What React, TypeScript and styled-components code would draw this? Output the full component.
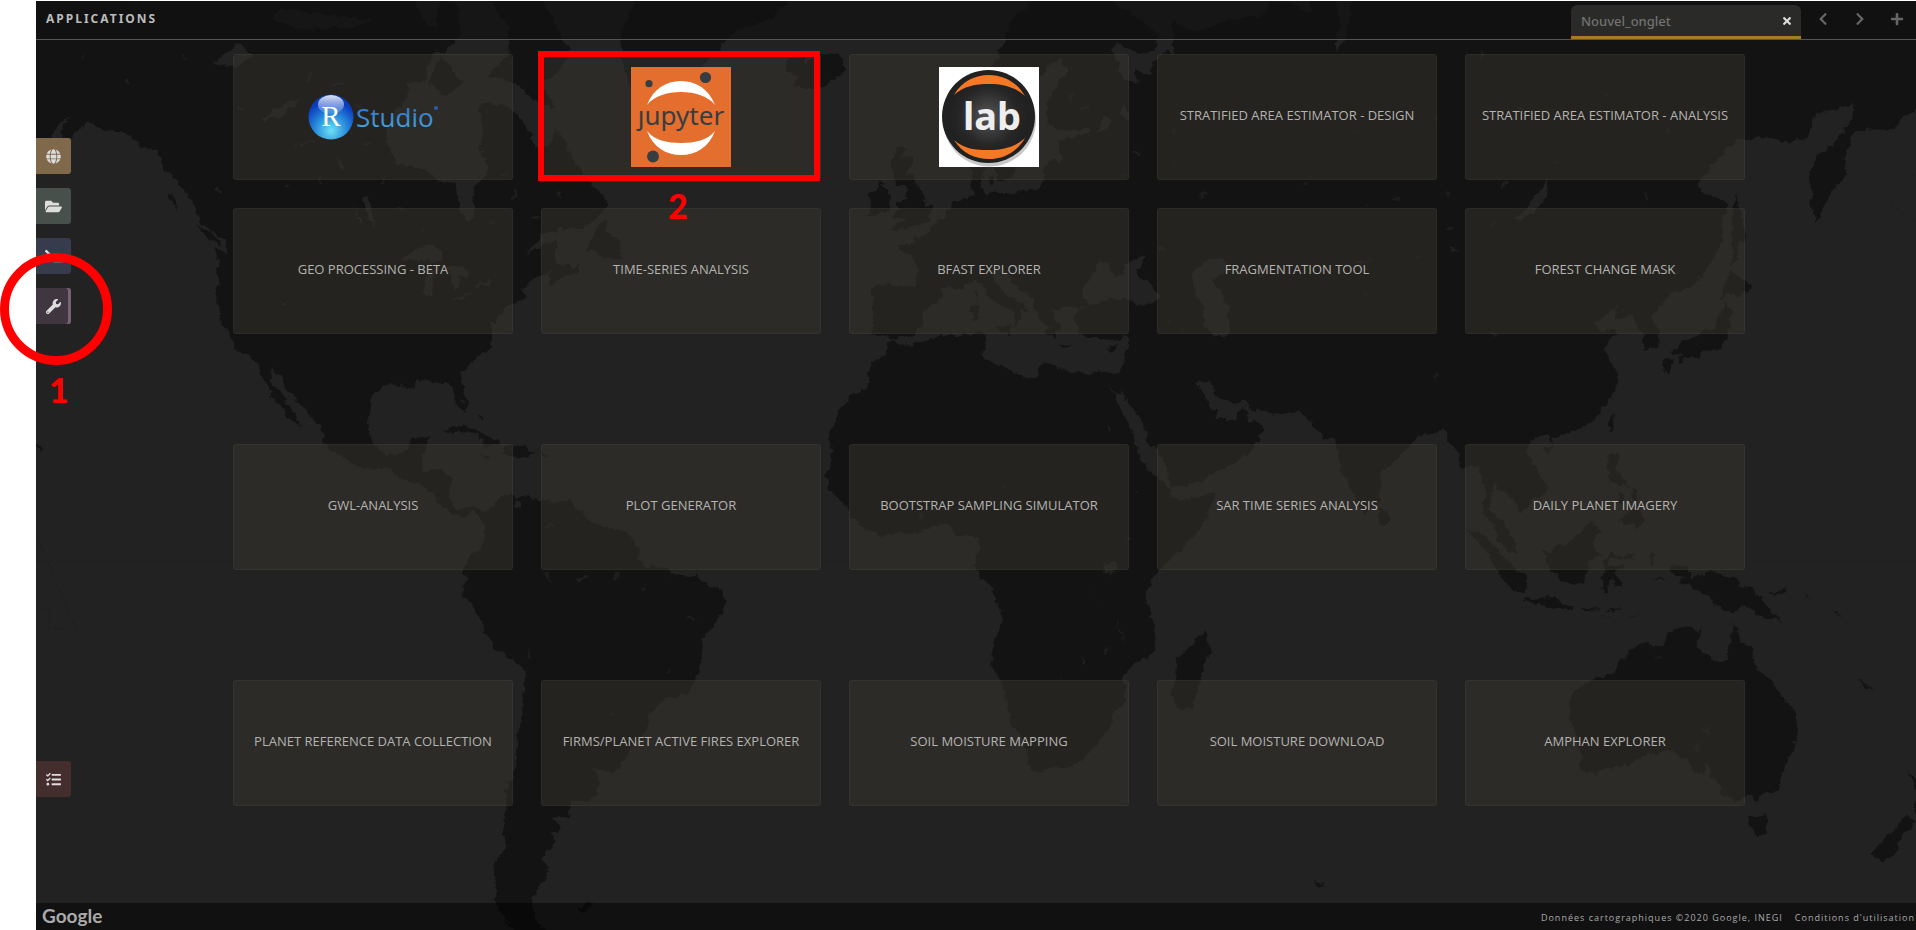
import React from "react";
import styled, { createGlobalStyle } from "styled-components";
import {
  FaChevronLeft,
  FaChevronRight,
  FaFolderOpen,
  FaGlobe,
  FaPlus,
  FaTasks,
  FaTerminal,
  FaTimes,
  FaWrench,
} from "react-icons/fa";

const GlobalStyle = createGlobalStyle`
  *, *::before, *::after { box-sizing: border-box; }
  body {
    margin: 0;
    background: #fff;
    font-family: "Noto Sans", "Open Sans", sans-serif;
  }
  button, input { font: inherit; }
`;

/* ---------- world map ---------- */

/* Coastlines as "lon,lat" pairs, projected with Web Mercator. */
const LAND: string[] = [
  // the Americas
  "-170,72 -170,66 -165,62 -162,59 -158,58.6 -156.5,57 -154.2,58.3 -153.5,59.4 -151.8,60.8 -150,61.2 -151.8,60 -151,59.2 -149,60 -147,60.9 -145,60.4 -143.5,60 -141,60 -139.5,59.6 -137.5,58.6 -136,58.3 -135,58.5 -134,57.5 -133.5,56.5 -131.5,55.5 -130.2,54.5 -128.8,53.4 -127.8,52 -127.4,51 -125.5,50.3 -124,49.4 -122.8,49 -122.4,47.5 -124.6,48.3 -124,46.2 -124.1,44 -124.4,42.8 -124.1,41 -123.8,39 -122.5,37.5 -121.9,36.6 -120.6,34.6 -118.5,34 -117.2,32.6 -116,30.5 -115.7,29.7 -114.2,28.5 -115,27.8 -113.6,26.7 -112.2,25.5 -112,24.6 -110.3,23.4 -109.5,23.1 -110.4,24.3 -111.2,25.8 -112.7,27.8 -114.5,30 -114.8,31.8 -113.1,31.1 -112.2,29 -110.5,27.4 -109.3,26.3 -108,25 -106.4,23.2 -105.4,21.5 -105.6,20.4 -104.3,19.2 -102,17.9 -99.8,16.7 -97,15.8 -94.8,16.2 -93.5,15.6 -92.2,14.5 -90,13.8 -87.6,13 -87.4,12.5 -86,11.2 -85.7,10 -84.8,9.8 -83.6,8.8 -82.8,8.2 -81.2,7.7 -80.3,7.4 -80,8.3 -79.4,8.9 -78.2,8.2 -77.6,7 -77.3,5.6 -77.2,4 -77.9,2.6 -78.9,1.3 -80.1,0.6 -80.4,-0.5 -80.9,-2.2 -79.9,-3 -81.3,-4.5 -81,-6 -79.8,-7.2 -78.6,-9.3 -77.5,-11.8 -76.2,-14 -75.3,-15.3 -73,-16.6 -71.3,-17.8 -70.3,-18.5 -70.1,-20.5 -70.5,-23.5 -70.6,-26 -71.4,-29.5 -71.6,-32 -71.6,-33.5 -72.6,-36 -73.5,-37.5 -73.3,-39.4 -73.9,-41 -74,-43 -73.5,-45 -75.5,-46.8 -75.2,-49 -75.4,-51 -74,-53 -71,-55 -66,-55.5 -65,-54.8 -68,-53.5 -68.6,-52.3 -69,-51 -68,-50 -65.8,-47.8 -67.5,-46.2 -65.3,-44.8 -65,-43 -64,-42.5 -65,-41 -62.5,-41 -62,-39 -59,-38.7 -57.6,-38 -56.8,-36.4 -57.3,-35.3 -58.4,-34 -56.3,-34.8 -54.5,-34.8 -53.5,-33.8 -52.2,-32 -50.6,-30.5 -48.8,-28.6 -48.6,-26 -47.5,-25 -44.8,-23.2 -42,-22.9 -41,-22 -40,-20 -39.2,-17.8 -39,-15 -38.5,-13 -37.2,-11.5 -35.3,-9.2 -34.8,-7.3 -35.4,-5.3 -37,-4.8 -38.6,-3.7 -40,-2.8 -43,-2.4 -44.4,-2.5 -44.7,-1.6 -47.5,-0.7 -48.8,-1.3 -50,0.2 -50.2,1.8 -51.3,4 -52.8,5.1 -55,5.9 -57.2,6 -58.6,7 -60.2,8.4 -61.8,9.7 -62,10.7 -64.5,10.3 -66,10.6 -68.2,10.6 -69.8,11.5 -71.4,11 -72,11.5 -72.5,12 -74.3,11.1 -75.5,10.5 -76.8,8.6 -77.4,8.6 -79.5,9.6 -81,8.8 -82.4,9.2 -83.7,11 -83.4,12.6 -83.2,15 -85,15.9 -88.2,15.7 -88.2,18 -87.5,19.8 -86.8,21.3 -90.3,21.1 -90.7,19.3 -92,18.6 -94.5,18.2 -96,19.3 -97.4,21.5 -97.8,23 -97.2,26 -97,28 -95,29.2 -93.5,29.8 -91.5,29.4 -89.4,29.1 -89.6,30.2 -87.5,30.3 -85.5,29.9 -84,30 -82.8,28.8 -82.6,27.5 -81.8,26 -80.7,25.2 -80.1,26.8 -81,29.2 -81.4,31 -79.5,33 -77.9,34 -76.2,35 -75.8,36.7 -76.2,38.8 -75.2,38.4 -74.8,39.2 -74,40.7 -72,41.2 -70,41.8 -70.7,43 -68.8,44.4 -67,44.9 -65.5,45.4 -66.1,43.8 -65.3,43.6 -63.5,44.6 -61,45.3 -60,46.2 -61.5,45.8 -64.5,46.2 -64.8,47.5 -64.3,48.9 -67,48.5 -69.8,47.3 -67,49.6 -64,50.3 -60,50.3 -57.5,51.5 -55.8,52.5 -56,53.7 -58,54.8 -60,55.8 -61.8,57.5 -62.5,58.5 -64.5,60.3 -66,58.7 -68.5,58.7 -70,60.5 -72,61.8 -74.5,62.3 -78,62.5 -77.5,60 -78.3,58.6 -76.7,57.2 -77,55.8 -79.3,54.7 -79,52 -79.5,51.3 -80.5,51.3 -82,53 -82.3,55.2 -85,55.3 -88,56.5 -92.5,57 -94.3,58.7 -94.5,60.2 -93,61.8 -90.5,63 -91,64 -88,64.2 -87,65.3 -86,66.3 -84,66.3 -81.5,67.5 -82,69.5 -85,69.7 -86,68 -88,68.5 -90,70 -94,72",
  // Eurasia and Africa
  "28,72 25,71 20,70 15.5,68.5 13,66 11,64.5 8.5,63.3 5.2,62 5,60.5 5.5,58.9 7,58 8.5,58.3 10.5,59.3 11.3,58.8 12.7,56.2 13,55.4 14.3,55.5 15.9,56.1 16.5,57.5 17,58.7 18.8,59.8 17.3,60.8 17.4,62.3 20,63.7 21.6,65.2 24,65.8 25.4,65 22.5,63.3 21.4,61.5 22,60.4 25,60.1 29,60.3 29,59.8 26,59.6 23.5,59.2 23.7,58.5 24.4,57.3 22.5,57.6 21.1,56.8 21,55.3 19.8,54.5 18.5,54.7 14.2,53.9 12.3,54.3 10.8,54 9.9,54.9 10.8,56.4 10.5,57.6 8.2,57 8.2,55.5 8.8,54 7,53.5 5,53.3 4.2,52 2.5,51.1 1.6,50.6 0.1,49.5 -1.3,49.4 -1.8,49.6 -1.5,48.6 -4.7,48.5 -4.3,47.8 -2.2,47.2 -1.1,45.8 -1.5,43.4 -4,43.4 -8,43.7 -9.2,43 -8.7,41 -9.5,38.7 -8.8,38.3 -8.9,37 -7.2,37.1 -6.3,36.6 -5.5,36 -4.4,36.7 -2,36.8 -0.7,37.7 0.1,38.7 -0.3,39.5 0.8,40.8 3.2,41.9 3.1,43 4.5,43.4 6.6,43.1 8.8,44.4 10.2,43.9 11,42.4 12.5,41.5 14,40.8 15.6,40 16.1,38.8 15.7,37.9 16.6,38.4 17.1,39.3 16.6,39.8 17,40.5 18.4,39.9 18.3,40.5 16,41.5 16,41.9 15,42 13.9,42.8 12.4,44.2 12.4,45.3 13.7,45.6 13.6,45 14.6,45.2 15.3,44 17,43 19,42 19.4,40.8 20,39.7 21.2,38.3 23,38.1 21.2,37.7 21.8,36.8 23,36.5 23,37.4 24,37.7 23,39.2 22.7,40.4 24,40.2 24.5,40.8 26,40.7 27,40.5 29,41.1 28,42 27.7,42.8 28.6,43.8 29.7,45 31,46.6 32.5,46.1 33.5,44.6 35.3,45.1 35,46.2 37.5,46.8 39.2,47.1 38,46.2 37.3,45 39.5,43.8 41.5,42 40,41 38,41 36.2,41.5 35,42 32,41.6 30,41.1 29,41 27.3,40.3 26.2,39.3 26.8,38.3 27.4,37 28.3,36.7 30.5,36.4 32,36.1 34,36.3 35.9,36.7 35.8,35 34.9,32.5 34.2,31.3 32.3,31.2 31,31.5 29,30.9 25,31.6 23,32.5 21.5,32.9 20,32 20,30.8 18.5,30.4 15.6,31.6 13,32.8 11,33.3 10.1,34.3 11,35.5 10.8,37 9.8,37.3 7,36.9 3,36.8 -1,35.7 -3,35.3 -5.3,35.8 -6,35.7 -6.8,34 -8.5,33.3 -9.8,31.5 -9.7,29.9 -11.5,28.2 -13,27.7 -14.5,26 -16,23.7 -17,21 -16.3,19.3 -16.5,16 -17.5,14.7 -16.7,12.5 -15,10.9 -13.3,9 -12.5,7.4 -9.2,5 -7.6,4.4 -4,5.2 -2,4.8 1,5.9 4,6.4 5.5,5 6,4.3 8.5,4.6 9.5,4 9.8,2.5 9.3,0.5 8.8,-0.8 9.8,-2.5 11.8,-4.6 12.3,-6 13.3,-8.5 13.8,-10.8 12.5,-13.5 11.8,-16.5 12,-18.2 14.4,-22.3 14.6,-24.5 15.2,-27 16.5,-28.7 18.2,-31.8 18.2,-33.8 20,-34.8 22.5,-34.1 25.7,-34 28,-32.9 31,-29.8 32.7,-28.2 32.8,-26 35.5,-24 35.4,-22 34.8,-20 37,-17.8 40,-16.2 40.8,-14.8 40.4,-11 39.3,-8 38.8,-6 39.3,-4.6 40.5,-2.5 42.5,-0.5 45.5,2.5 48,4.8 49.8,8 51.2,11.8 48,11.2 45,10.5 43.3,11.5 43.2,12.5 41.2,14.7 39.5,15.5 37.4,18.8 37.2,21 35.6,23.8 34,26.5 32.6,29.9 33.5,28.3 34.3,27.9 34.9,29.5 34.7,28 36.5,26 38.5,23.6 39.2,21 41,19 42.6,16.5 43.3,12.8 45,12.9 48.5,14 52,15.6 55,17.3 57.7,19 58.7,20.5 59.8,22.5 58.7,23.7 57,24 56.3,26.2 55.5,25.5 54,24.2 51.6,24.2 51.5,25.8 50.8,25.5 50.2,26.6 48.8,28.5 48,30 50,30.1 51.5,27.8 54.5,26.6 56.5,27.1 57.2,25.8 61.5,25.1 66.5,25.3 68,23.7 69.2,22.3 70.3,20.9 72.3,21.3 72.8,19 73.4,16 74.8,12.9 76.3,9.8 77.5,8.1 78.2,9 79.8,10.3 80.2,13 80.2,15.5 82.3,16.8 85,19.5 87,21.4 89,21.8 91.8,22.4 92.3,20.7 94.2,18.5 94.3,16 96.2,16.6 97.6,16.3 98.6,12.5 98.3,8.5 100.2,6.4 100.8,3.8 103.5,1.4 104.2,1.5 103.4,4.2 102,6.3 100.3,8.2 99.3,9.4 99.9,12 100.2,13.4 101,12.7 103,11 105,8.7 106.8,10.5 109.2,11.7 109.3,13.5 107,17 105.7,19 106.8,20.8 108.3,21.6 109.8,21.5 110.3,20.3 110.6,21.3 113.5,22.2 116.5,23 119,25.2 120.5,27.3 121.8,29.2 121.8,31.5 119.5,34.8 120.8,36.5 122.5,37.2 121,37.8 119,37.3 117.8,38.6 119,39.2 121.8,40.8 121.3,39 124,39.8 125.2,38.5 126.5,36.8 126.3,34.6 129,35.2 129.4,37 127.6,39.5 129.7,41 130.7,42.3 135,43.5 138.5,46.5 140.4,49 140.3,51.5 141.3,53 138,54 135.5,54.7 139,57.2 143,59.3 148,59.5 152,59 155.5,59.5 156.7,61.5 160,61.8 163.5,62.5 162.8,60.7 160,59 157,57.8 155.7,56 156,53 156.7,51 158.5,53 160,54.8 161.8,55.5 162,57.8 163,59.8 166,60.2 170,60.2 173,61.5 177,62.6 179,62.5 180,65 180,72",
  // Arctic and North Atlantic
  "-73,72 -67.5,70 -64,67.5 -62,66.5 -64,65 -67,64 -65,62 -68,62.5 -72,64 -77,64.5 -73,66 -73,68 -77,70 -82,72",
  "-87,64 -85,66 -81,64 -84,63",
  "-54,72 -51,69.5 -53.5,67.5 -53,65.5 -51.5,63.5 -49,61.5 -45,60 -43,60.2 -42.5,62 -40.8,64.5 -38,65.7 -33,67.8 -27,68.5 -22.5,70 -22,72",
  "-24.3,65.6 -22.2,66.4 -21,65.5 -18,66.1 -15,66.2 -13.7,65 -16,64.2 -18.8,63.4 -22.7,63.9 -22,64.5 -24,64.9",
  "-59.3,47.8 -57.3,50.5 -55.6,51.5 -56,50 -53.5,49 -53,46.8 -55.5,47",
  "-128,50.8 -125,49.8 -123.5,48.4 -125.5,48.9",
  "-133,54 -131.8,54 -131.2,52.2",
  "-154.5,57.5 -152.2,58 -153,56.9",
  // British Isles and the Baltic
  "-5.7,50.1 -3.5,50.3 -1,50.7 1.4,51.2 0.7,51.5 1.7,52.7 0.2,53 -0.2,54 -1.5,55 -2,55.9 -3.2,56 -2,57.6 -4,57.7 -3,58.6 -5,58.6 -5.8,57.3 -5.6,56 -4.8,54.8 -3,54.8 -3,53.5 -4.6,53.2 -4.5,52.5 -5.2,51.8 -3,51.4 -4.3,51",
  "-10,51.6 -6.3,52.2 -6,54 -7.5,55.3 -8.5,54.4 -10,54 -9,53.2",
  "11,55.7 12.5,56 12,54.9",
  // Mediterranean
  "12.5,38 15.6,38.2 15.1,36.7",
  "8.3,40.8 9.7,41 9.6,39.2 8.5,39",
  "8.7,42.5 9.4,43 9.3,41.5",
  "23.6,35.5 26.3,35.3 24.8,34.9",
  "32.4,35.1 34.5,35.6 33,34.6",
  // Caribbean
  "-84.9,21.9 -82.5,23.1 -80,23 -77,21.6 -74.3,20.2 -77.5,19.9 -77.2,20.6 -78.5,21.6 -81.5,22.2",
  "-74.4,18.4 -73,19.9 -70,19.8 -68.4,18.6 -71,17.9",
  "-78.3,18.4 -76.3,18.2 -77,17.8",
  "-67.2,18.5 -65.7,18.4 -67.1,18",
  "-78.3,25 -77.8,25.1 -77.9,24",
  "-156,20.2 -155,19.6 -155.7,19",
  // Indian Ocean
  "49.3,-12 50.4,-15.7 49.5,-17.5 47.2,-25 45,-25.5 43.5,-23 44.4,-20 44.3,-16.7 46,-15.8 48,-13.8",
  "79.8,9.7 81.8,7.5 81,6.1 79.9,6.5",
  "68.7,-48.8 70.4,-49.2 69,-49.7",
  // Southeast Asia
  "95.3,5.6 97.8,5.1 100.5,2.2 103.5,-1 106,-3 105.8,-5.8 104.5,-5.8 102,-3.8 100.3,-1 98.7,1.8",
  "105.3,-6.7 108.5,-6.6 111,-6.5 112.8,-7.6 114.5,-7.9 114.4,-8.7 110,-8.2 106.5,-7.4",
  "115.2,-8.2 119,-8.4 117,-9",
  "119.9,-8.4 122.8,-8.3 121,-9",
  "118.9,-9.5 120.7,-10.2 119.5,-9.9",
  "123.5,-10.3 127,-8.4 125.2,-9.3",
  "109,1.8 110,1.6 111.5,2.7 113.5,3.6 115.5,5.3 117,7 119.2,5.2 117.8,4 118,2 119,1 117.5,0.7 116.3,-1.8 116,-3.8 114.5,-4 111.8,-3.5 110,-1.3 109,0.3",
  "119.8,0.2 120.8,1.3 123,0.9 125.2,1.6 124.3,0.4 120.2,0.5 120.2,-0.9 123.3,-0.8 121.5,-1.9 122.8,-4.2 121.6,-4.7 120.8,-2.8 120.3,-5.5 119.5,-5.4 119,-2.8",
  "127.6,1.8 128.6,1 127.9,-0.8",
  "128,-3.2 130.8,-3.4 129.5,-2.9",
  "120.6,18.5 122.2,18.4 121.6,16 124,12.8 122.5,13.5 120.7,13.9 119.9,16.3",
  "122,11.8 123,11.5 123.2,9.2 122.2,10.3",
  "124.4,12.5 125.4,12.3 125.2,10.2 124.5,11",
  "122,7 123.5,8.6 125.5,9.7 126.5,7.5 125.4,5.8 124,6.5",
  "117.3,8.4 119.5,11.3 118,8.7",
  "121.5,25.2 120.8,22 120.1,23.3",
  "108.7,19.3 110.6,20.1 110,18.5",
  // Japan and Sakhalin
  "131,34.3 133,35.6 136.8,37.3 138.8,37.9 140,39.8 141,41.4 142,39.5 140.8,36 139.8,35 137,34.6 135.7,33.6 132.5,34.1",
  "130,33.5 131.8,33.5 131,31.2 130.2,31.4",
  "132.5,33.5 134.5,34.2 133,32.8",
  "140,41.6 140.5,43.4 141.8,45.4 145.4,43.4 143.2,42 141.2,42.5",
  "142,46 142,50 142.5,54.2 143.5,52 144.5,49 143,49 143,46.8",
  // Oceania
  "131,-0.8 134,-0.8 134.8,-3.3 138,-1.7 141,-2.6 145.8,-5.2 147.8,-6.6 147,-6.8 150.8,-10.4 147.5,-10 144,-7.7 142.5,-9.2 139,-8 138.5,-6.8 135,-4.4 132.8,-4 133.8,-2.8 132,-2.6",
  "148.4,-5.7 150.2,-5.5 152,-4.2 151,-5.9 149.2,-6.3",
  "154.8,-5.5 155.8,-6.8 155.2,-6.4",
  "159.7,-8.3 161.2,-9.6 160.3,-9.3",
  "164,-20.2 167,-22.3 165.2,-21.6",
  "142.5,-10.8 143.8,-14.4 145.4,-15 146.2,-18.8 149,-20.5 150.8,-23.3 153,-25.2 153.6,-28.5 152.5,-32.3 150.8,-34.8 150,-37.4 147.5,-38 146.3,-39 144.8,-38 143.5,-38.8 140.5,-38 139.5,-36 138,-35.6 138.3,-34.2 137.8,-33 137,-35.2 135.2,-34.5 134,-32.8 131.2,-31.5 126,-32.3 123.6,-34 120,-34 118,-35 115.2,-34.3 115.7,-32 113.4,-26 113.8,-22.6 117,-20.6 121.5,-19.2 122.3,-17.2 124.8,-15.3 126.2,-14 128.2,-14.9 129.6,-14.8 130.8,-12.4 132.7,-11.4 136.8,-12.2 135.6,-14.8 139.5,-17.6 140.9,-17.3 141.8,-13",
  "144.8,-40.8 148.2,-40.9 148,-43 146.5,-43.6 145.3,-42.2",
  "172.8,-34.5 175,-36.5 178,-37.6 177,-39.5 175.2,-41.6 173.8,-39.3 174.8,-38",
  "172.8,-40.6 174.2,-41.7 171.2,-44.3 170.5,-46 168.5,-46.6 166.6,-45.8 168.5,-44 171.5,-41.8",
  "-61,-51.8 -58,-51.5 -60,-52.3",
];

const WATER: string[] = [
  // Barents and White Seas, Gulf of Ob
  "30,70.2 36,69 41,67.5 40.5,66.4 38,66.1 34,66.9 33,66.5 35,64.3 37.5,63.9 37,65 40,64.7 40,65.5 42.5,66.4 44,66.2 43.5,68.5 46,68 48,67.7 54,68.5 60,68.8 61,69.8 68,69 67,72 30,72",
  "72,72 73,68 72,66.3 74,67 75,69 74,72",
  // Asia
  "47,45 49,46.5 51.5,47 53,46.5 53,45.3 51,44.5 50.3,44.3 52.5,42.5 52.8,41.2 54,41 53,40 53.9,37.2 52,36.6 50,37.4 49,38.5 49.5,40.3 48,42 47.5,43.5",
  "58.5,45 58.8,45.8 59.6,44.5",
  "104,51.5 106,52.4 109.8,55.7 109.5,54 107.5,52.3 105,51.4",
  "73.8,45 76,46.6 79,46.6 75.5,46.2",
  "77,42.5 78.3,42.3 77,42.2",
  "30.5,60 31.5,61.5 33,61 32,60",
  "34.5,61.5 35,62.5 36.3,61",
  // Africa
  "31.7,-0.5 34,0 34,-1 33,-2.4 31.8,-2.3",
  "29.2,-3.5 29.6,-5 31,-8.7 30.3,-7",
  "34,-9.6 34.8,-12 35.2,-14.3 34.4,-12",
  // North America
  "-92,46.7 -89,48 -87,48.7 -84.7,47.5 -84.6,46.5 -87,46.5 -90,46.7",
  "-87.9,42 -86.4,42 -86.3,44.5 -85.2,45.8 -87.5,45.2 -87.9,43",
  "-84.5,46 -81,45.9 -80,44.6 -81.6,44.8 -81.7,43.2 -82.5,43.1 -83.4,45",
  "-83.3,41.7 -79,42.8 -81.5,41.6",
  "-79.7,43.3 -76.3,44.1 -76.5,43.5",
  "-98.8,53.7 -97.8,53.8 -96.5,50.5 -97,50.6",
  "-100,53 -99.6,51.5 -98.6,50.6",
  "-116.5,61 -112,62.5 -109.5,62.8 -113,61.2",
  "-125,65.5 -120,67 -118,66 -121,65.2",
  "-111,58.7 -106,59.4 -108,58.9",
  "-103,57.8 -101.7,56.5 -102.6,56.5",
  "-113,41.6 -112,40.8 -112.6,40.8",
  "-115,68.5 -108,67.8 -102,68 -97,68.4 -105,68.8 -113,69.2",
  // South America
  "-72,10.6 -71.3,10.6 -71,9.3 -72,9.4",
  "-70,-15.5 -69,-16.4 -69.3,-16.5",
];

/* Small lakes and reservoirs: lon, lat, size. */
const LAKES: Array<[number, number, number]> = [
  [-120, 62, 3], [-130, 66, 2], [-148, 66, 2], [-140, 64, 2], [-108, 64.5, 4], [-103, 64, 4],
  [-99, 62, 4], [-105, 61, 3], [-98, 59, 4], [-101, 60, 3], [-95, 55.5, 3], [-92, 52.5, 3],
  [-106, 55.5, 3], [-112, 55, 2], [-124, 54.5, 3], [-88, 50, 3], [-74, 56, 3], [-76, 51, 2],
  [-72, 54, 4], [-68, 51.5, 3], [-64, 54, 3], [-66, 56, 2], [-81, 27, 2], [26, 63, 3], [28, 62, 4],
  [26, 65, 2], [13.5, 58.9, 3], [37.5, 58, 3], [44, 57, 2], [49, 54, 3], [42, 48, 3], [44, 60, 2],
  [67, 55, 2], [62, 61, 2], [78, 53, 2], [83, 53.5, 3], [92, 54, 2], [102, 55, 3], [111, 57, 2],
  [100, 51, 2], [92.5, 50.3, 3], [93, 48, 3], [90, 61, 2], [105, 62, 2], [127, 53.8, 3],
  [132.5, 45, 3], [100, 37, 3], [90, 31, 3], [87, 47, 2], [76, 60, 2], [98, 66, 3], [120, 63, 2],
  [131, 60, 2], [43, 38.6, 2], [45.5, 37.6, 2], [35, 56, 2], [14, 13, 2], [32.5, 22.8, 2],
  [-0.5, 7.8, 3], [37.3, 12, 2], [28, -17.2, 3], [32, -15.7, 3], [36, 4, 3], [24, -20, 2],
  [-45, -19, 2], [-41, -10, 3], [-49, -4.5, 2], [-60, -3, 4], [-66, -3, 3], [-54, -2.4, 3],
  [-55, -26, 2], [-58, -29, 2], [-66, 6, 3], [137.5, -28.5, 3], [136, -31, 3], [129, -16.5, 2],
];

const EARTH_RADIUS = 326;
const MERIDIAN_X = 924;
const EQUATOR_Y = 561;

function project(lon: number, lat: number): [number, number] {
  const phi = (lat * Math.PI) / 180;
  const x = MERIDIAN_X + (EARTH_RADIUS * lon * Math.PI) / 180;
  const y = EQUATOR_Y - EARTH_RADIUS * Math.log(Math.tan(Math.PI / 4 + phi / 2));
  return [Math.round(x * 10) / 10, Math.round(y * 10) / 10];
}

function toPath(coast: string): string {
  const points = coast.split(" ").map((pair) => {
    const [lon, lat] = pair.split(",").map(Number);
    return project(lon, lat).join(" ");
  });
  return `M${points.join("L")}Z`;
}

const MapSvg = styled.svg`
  position: absolute;
  inset: 0;
  width: 100%;
  height: 100%;
  display: block;
`;

function WorldMap() {
  return (
    <MapSvg viewBox="36 1 1880 929" preserveAspectRatio="xMidYMid slice" aria-hidden="true">
      <defs>
        <filter id="coast" x="0" y="0" width="100%" height="100%" colorInterpolationFilters="sRGB">
          <feTurbulence type="fractalNoise" baseFrequency="0.13" numOctaves="3" seed="7" />
          <feDisplacementMap in="SourceGraphic" scale="8" xChannelSelector="R" yChannelSelector="G" />
        </filter>
      </defs>
      <rect x="0" y="0" width="1920" height="940" fill="#222" />
      <g filter="url(#coast)">
        <rect x="0" y="-60" width="1980" height="1060" fill="#222" />
        <path d={LAND.map(toPath).join("")} fill="#131313" />
        <path d={WATER.map(toPath).join("")} fill="#222" />
        {LAKES.map(([lon, lat, size], i) => {
          const [x, y] = project(lon, lat);
          return (
            <ellipse
              key={i}
              cx={x}
              cy={y}
              rx={size * 1.5}
              ry={size * 0.5}
              transform={`rotate(${(i * 67) % 180} ${x} ${y})`}
              fill="#1e1e1e"
            />
          );
        })}
      </g>
      <g fill="none" stroke="#1e1e1e" strokeDasharray="4 3">
        <path d="M36 561H405M680 561H860M1300 561H1440M1690 561H1916" />
        <path d="M37 537L76 629H49V609H37" />
        <path d="M1916 168L1891 205L1916 222" />
      </g>
    </MapSvg>
  );
}

/* ---------- application logos ---------- */

const Logo = styled.svg`
  display: block;
  flex: none;
  text-transform: none;
`;

function RStudioLogo() {
  return (
    <Logo width="134" height="50" viewBox="0 0 134 50" role="img" aria-label="RStudio">
      <defs>
        <radialGradient id="ball" cx="50%" cy="80%" r="75%">
          <stop offset="0" stopColor="#6fe0f5" />
          <stop offset="0.45" stopColor="#2a8fdc" />
          <stop offset="0.85" stopColor="#0b3fc0" />
          <stop offset="1" stopColor="#0a3ab4" />
        </radialGradient>
        <linearGradient id="shine" x1="0" y1="0" x2="0" y2="1">
          <stop offset="0" stopColor="#fff" stopOpacity="0.85" />
          <stop offset="1" stopColor="#fff" stopOpacity="0.1" />
        </linearGradient>
        <linearGradient id="word" x1="0" y1="0" x2="0" y2="1">
          <stop offset="0" stopColor="#2365c4" />
          <stop offset="1" stopColor="#4fb0e4" />
        </linearGradient>
      </defs>
      <circle cx="25" cy="25" r="22.5" fill="url(#ball)" />
      <ellipse cx="25" cy="12.500" rx="13" ry="9.500" fill="url(#shine)" />
      <text x="25" y="34" textAnchor="middle" fontFamily="Liberation Serif, serif" fontSize="29" fill="#fff">
        R
      </text>
      <text x="50" y="35" fontFamily="Open Sans, sans-serif" fontSize="26" fill="url(#word)">
        Studio
      </text>
      <circle cx="130" cy="16" r="2" fill="#2a5ca8" />
    </Logo>
  );
}

function JupyterLogo() {
  return (
    <Logo width="100" height="100" viewBox="0 0 100 100" role="img" aria-label="Jupyter">
      <rect width="100" height="100" fill="#e46e2e" />
      <path d="M16 38C22 22 35 14 50 14S78 22 84 38C77 29 64 25 50 25S23 29 16 38Z" fill="#fff" />
      <path d="M16 64C22 80 35 88 50 88S78 80 84 64C77 73 64 76 50 76S23 73 16 64Z" fill="#fff" />
      <g fill="#373e42">
        <circle cx="74.500" cy="10.500" r="5.600" />
        <circle cx="18" cy="16.700" r="3.600" />
        <circle cx="22" cy="89.500" r="5.900" />
        <text x="50" y="58" textAnchor="middle" fontFamily="Noto Sans, sans-serif" fontSize="26">
          ȷupyter
        </text>
      </g>
    </Logo>
  );
}

function LabLogo() {
  return (
    <Logo width="100" height="100" viewBox="0 0 100 100" role="img" aria-label="JupyterLab">
      <defs>
        <radialGradient id="disc">
          <stop offset="0" stopColor="#555" />
          <stop offset="0.7" stopColor="#262626" />
          <stop offset="1" stopColor="#202020" />
        </radialGradient>
      </defs>
      <rect width="100" height="100" fill="#fff" />
      <circle cx="50.500" cy="53" r="46.500" fill="#c9c7c7" />
      <circle cx="49.500" cy="49.500" r="46.500" fill="#202222" />
      <circle cx="49.500" cy="49.500" r="41" fill="url(#disc)" />
      <path d="M15 28C23 14 36 8 50 8S78 15 86 29C76 20 64 17 50 17S25 19 15 28Z" fill="#f57825" />
      <path d="M15 73C23 86 36 92 50 92S78 85 86 71C76 80 64 83 50 83S25 82 15 73Z" fill="#f57825" />
      <text
        x="53"
        y="63"
        textAnchor="middle"
        fontFamily="Noto Sans, sans-serif"
        fontSize="38"
        fontWeight="700"
        fill="#eee"
      >
        lab
      </text>
    </Logo>
  );
}

/* ---------- page ---------- */

const Page = styled.div`
  position: relative;
  min-height: 100vh;
  padding: 1px 0 0 36px;
  display: flex;
`;

const Workspace = styled.div`
  position: relative;
  flex: 1;
  min-width: 0;
  display: flex;
  flex-direction: column;
  overflow: hidden;
  background: #222;
`;

const Header = styled.header`
  position: relative;
  display: flex;
  align-items: flex-end;
  justify-content: space-between;
  height: 39px;
  padding-left: 10px;
  border-bottom: 1px solid #555;
  background: rgba(17, 17, 17, 0.65);
`;

const Title = styled.h1`
  margin: 0;
  align-self: center;
  padding-bottom: 2px;
  font-size: 12px;
  line-height: 18px;
  font-weight: 700;
  letter-spacing: 2px;
  text-transform: uppercase;
  color: #bbb;
`;

const TabBar = styled.div`
  display: flex;
  align-items: flex-end;
`;

const Tab = styled.div`
  display: flex;
  align-items: center;
  width: 230px;
  height: 34px;
  padding: 0 10px;
  border-bottom: 3px solid #a67c28;
  border-radius: 6px 6px 0 0;
  background: #2a2a29;
`;

const TabName = styled.input`
  flex: 1;
  min-width: 0;
  padding: 0;
  border: 0;
  outline: 0;
  background: none;
  font-size: 13px;
  line-height: 20px;
  font-weight: 500;
  color: #ccc;

  &::placeholder {
    color: #727271;
    opacity: 1;
  }
`;

const IconButton = styled.button<{ $color: string; $width: number }>`
  display: flex;
  align-items: center;
  justify-content: center;
  width: ${(p) => p.$width}px;
  height: 24px;
  padding: 0;
  border: 0;
  background: none;
  color: ${(p) => p.$color};
  cursor: pointer;
`;

const TabActions = styled.div`
  display: flex;
  align-items: center;
  padding: 0 1px 8px 3px;
`;

const Body = styled.div`
  position: relative;
  flex: 1;
  display: flex;
`;

const Nav = styled.nav`
  flex: none;
  display: flex;
  flex-direction: column;
  gap: 14px;
  width: 35px;
  padding: 98px 0 106px;
`;

const NavButton = styled.button<{ $background: string; $active?: boolean; $last?: boolean }>`
  display: flex;
  align-items: center;
  justify-content: center;
  height: 36px;
  margin-top: ${(p) => (p.$last ? "auto" : "0")};
  padding: 0;
  border: 0;
  border-radius: 0 3px 3px 0;
  background: ${(p) => p.$background};
  box-shadow: ${(p) => (p.$active ? "inset -3px 0 0 #7a6276" : "none")};
  color: #ddd;
  cursor: pointer;
`;

const Main = styled.main`
  flex: 1;
  min-width: 0;
  display: flex;
  flex-direction: column;
  align-items: center;
  gap: 110px;
  padding: 14px 9px 97px 0;
`;

const AppGrid = styled.div`
  display: grid;
  grid-template-columns: repeat(5, minmax(0, 1fr));
  gap: 28px;
  width: 100%;
  max-width: 1512px;
`;

const AppCard = styled.button<{ $logo?: boolean }>`
  display: flex;
  align-items: center;
  justify-content: center;
  height: 126px;
  padding: ${(p) => (p.$logo ? "0" : "0 8px 4px")};
  border: 1px solid rgba(72, 68, 56, 0.5);
  border-radius: 3px;
  background: rgba(57, 53, 45, 0.47);
  background-clip: padding-box;
  font-family: "Open Sans", "Noto Sans", sans-serif;
  font-size: 13px;
  line-height: 18px;
  text-transform: uppercase;
  color: #b4b3b1;
  cursor: pointer;
`;

const Footer = styled.footer`
  position: relative;
  display: flex;
  align-items: center;
  justify-content: flex-end;
  gap: 12px;
  height: 27px;
  padding: 2px 1px 0 6px;
  background: rgba(0, 0, 0, 0.5);
  font-family: "Open Sans", sans-serif;
  font-size: 9px;
  line-height: 16px;
  letter-spacing: 1px;
  color: #aaa;
`;

const GoogleMark = styled.a`
  margin-right: auto;
  padding-bottom: 3px;
  font-family: Lato, sans-serif;
  font-size: 19px;
  line-height: 22px;
  font-weight: 700;
  letter-spacing: 0;
  text-decoration: none;
  color: #aaa;
`;

const TermsLink = styled.a`
  color: inherit;
  text-decoration: none;
`;

/* ---------- tutorial marks laid over the page ---------- */

const StepCircle = styled.div`
  position: absolute;
  left: 0;
  top: 253px;
  width: 112px;
  height: 112px;
  border: 9px solid #f00;
  border-radius: 50%;
  pointer-events: none;
`;

const Highlighted = styled.div`
  position: relative;
  display: grid;

  &::after {
    content: "";
    position: absolute;
    inset: -3px 1px -1px -3px;
    border: 6px solid #f00;
    pointer-events: none;
  }
`;

const StepNumber = styled.span<{ $left: string; $top: string }>`
  position: absolute;
  left: ${(p) => p.$left};
  top: ${(p) => p.$top};
  font-family: Lato, sans-serif;
  font-size: 34px;
  line-height: 40px;
  font-weight: 900;
  color: #f00;
  pointer-events: none;
`;

const TOP_NAMES = [
  "Stratified area estimator - Design",
  "Stratified area estimator - Analysis",
  "Geo Processing - Beta",
  "Time-series analysis",
  "BFAST explorer",
  "Fragmentation tool",
  "Forest change mask",
];

const GROUPS: string[][] = [
  ["GWL-Analysis", "Plot generator", "Bootstrap sampling simulator", "SAR time series analysis", "Daily Planet imagery"],
  [
    "Planet reference data collection",
    "FIRMS/Planet active fires explorer",
    "Soil moisture mapping",
    "Soil moisture download",
    "Amphan explorer",
  ],
];

export default function App() {
  return (
    <>
      <GlobalStyle />
      <Page>
        <Workspace>
          <WorldMap />
          <Header>
            <Title>Applications</Title>
            <TabBar>
              <Tab>
                <TabName aria-label="Tab name" placeholder="Nouvel_onglet" />
                <IconButton $color="#ddd" $width={8} aria-label="Close tab">
                  <FaTimes size={12} />
                </IconButton>
              </Tab>
              <TabActions>
                <IconButton $color="#666" $width={37} aria-label="Previous tab">
                  <FaChevronLeft size={14} />
                </IconButton>
                <IconButton $color="#666" $width={37} aria-label="Next tab">
                  <FaChevronRight size={14} />
                </IconButton>
                <IconButton $color="#666" $width={37} aria-label="Add tab">
                  <FaPlus size={14} />
                </IconButton>
              </TabActions>
            </TabBar>
          </Header>
          <Body>
            <Nav aria-label="Sections">
              <NavButton $background="#80694a" aria-label="Process">
                <FaGlobe size={15} />
              </NavButton>
              <NavButton $background="#47504a" aria-label="Files">
                <FaFolderOpen size={17} />
              </NavButton>
              <NavButton $background="#373c4d" aria-label="Terminal">
                <FaTerminal size={18} />
              </NavButton>
              <NavButton $background="#40363f" $active aria-label="Applications">
                <FaWrench size={15} />
              </NavButton>
              <NavButton $background="#442e2d" $last aria-label="Tasks">
                <FaTasks size={15} />
              </NavButton>
            </Nav>
            <Main>
              <AppGrid>
                <AppCard $logo>
                  <RStudioLogo />
                </AppCard>
                <Highlighted>
                  <AppCard $logo>
                    <JupyterLogo />
                  </AppCard>
                  <StepNumber $left="127px" $top="132px">
                    2
                  </StepNumber>
                </Highlighted>
                <AppCard $logo>
                  <LabLogo />
                </AppCard>
                {TOP_NAMES.map((name) => (
                  <AppCard key={name}>{name}</AppCard>
                ))}
              </AppGrid>
              {GROUPS.map((group) => (
                <AppGrid key={group[0]}>
                  {group.map((name) => (
                    <AppCard key={name}>{name}</AppCard>
                  ))}
                </AppGrid>
              ))}
            </Main>
          </Body>
          <Footer>
            <GoogleMark href="#google">Google</GoogleMark>
            <span>Données cartographiques ©2020 Google, INEGI</span>
            <TermsLink href="#terms">Conditions d'utilisation</TermsLink>
          </Footer>
        </Workspace>
        <StepCircle />
        <StepNumber $left="49px" $top="370px">
          1
        </StepNumber>
      </Page>
    </>
  );
}
